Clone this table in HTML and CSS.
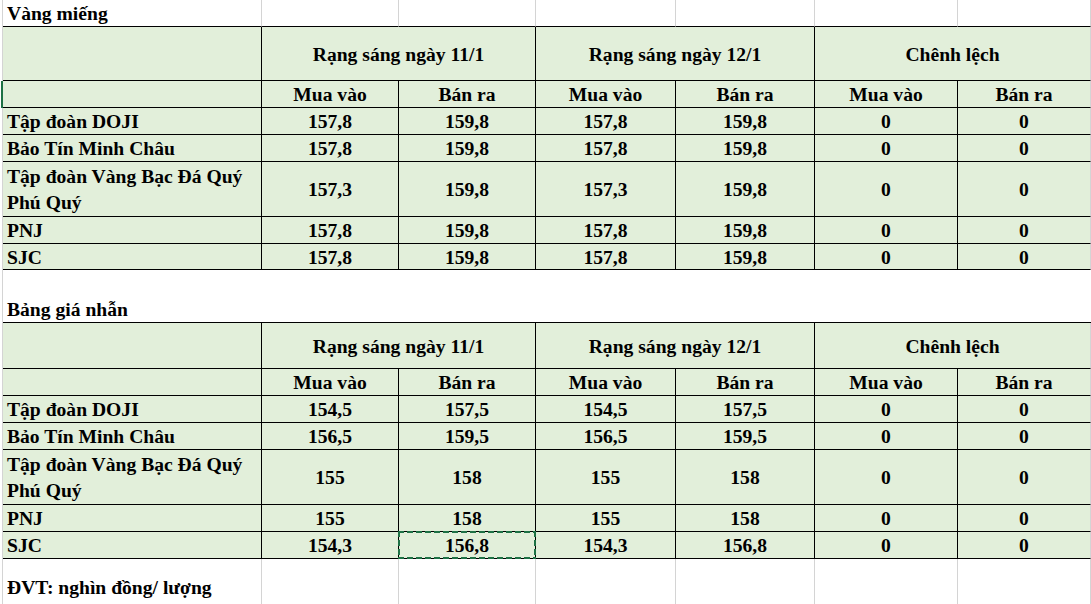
FILE: index.html
```html
<!DOCTYPE html>
<html lang="vi">
<head>
<meta charset="utf-8">
<title>Bảng giá vàng</title>
<link rel="stylesheet" href="styles.css">
</head>
<body>
<div class="sheet">
<table class="grid">
  <colgroup>
    <col class="ca"><col class="cb"><col class="cc"><col class="cd"><col class="ce"><col class="cf"><col class="cg">
  </colgroup>
  <tbody>
    <tr class="h27">
      <td class="title lined left">Vàng miếng</td><td class="title lined"></td><td class="title lined"></td><td class="title lined"></td><td class="title lined"></td><td class="title lined"></td><td class="title lined"></td>
    </tr>
    <tr class="h54">
      <td class="g"></td><td class="g" colspan="2">Rạng sáng ngày 11/1</td><td class="g" colspan="2">Rạng sáng ngày 12/1</td><td class="g last" colspan="2">Chênh lệch</td>
    </tr>
    <tr class="h27">
      <td class="g mark"></td><td class="g">Mua vào</td><td class="g">Bán ra</td><td class="g">Mua vào</td><td class="g">Bán ra</td><td class="g">Mua vào</td><td class="g last">Bán ra</td>
    </tr>
    <tr class="h27">
      <td class="g left">Tập đoàn DOJI</td><td class="g">157,8</td><td class="g">159,8</td><td class="g">157,8</td><td class="g">159,8</td><td class="g">0</td><td class="g last">0</td>
    </tr>
    <tr class="h27">
      <td class="g left">Bảo Tín Minh Châu</td><td class="g">157,8</td><td class="g">159,8</td><td class="g">157,8</td><td class="g">159,8</td><td class="g">0</td><td class="g last">0</td>
    </tr>
    <tr class="h55">
      <td class="g left wrap">Tập đoàn Vàng Bạc Đá Quý<br>Phú Quý</td><td class="g">157,3</td><td class="g">159,8</td><td class="g">157,3</td><td class="g">159,8</td><td class="g">0</td><td class="g last">0</td>
    </tr>
    <tr class="h27">
      <td class="g left">PNJ</td><td class="g">157,8</td><td class="g">159,8</td><td class="g">157,8</td><td class="g">159,8</td><td class="g">0</td><td class="g last">0</td>
    </tr>
    <tr class="h26">
      <td class="g left">SJC</td><td class="g">157,8</td><td class="g">159,8</td><td class="g">157,8</td><td class="g">159,8</td><td class="g">0</td><td class="g last">0</td>
    </tr>

    <tr class="h26">
      <td class="blank" colspan="7"></td>
    </tr>
    <tr class="h27">
      <td class="blank lined left" colspan="7">Bảng giá nhẫn</td>
    </tr>
    <tr class="h46">
      <td class="g"></td><td class="g" colspan="2">Rạng sáng ngày 11/1</td><td class="g" colspan="2">Rạng sáng ngày 12/1</td><td class="g last" colspan="2">Chênh lệch</td>
    </tr>
    <tr class="h27">
      <td class="g"></td><td class="g">Mua vào</td><td class="g">Bán ra</td><td class="g">Mua vào</td><td class="g">Bán ra</td><td class="g">Mua vào</td><td class="g last">Bán ra</td>
    </tr>
    <tr class="h27">
      <td class="g left">Tập đoàn DOJI</td><td class="g">154,5</td><td class="g">157,5</td><td class="g">154,5</td><td class="g">157,5</td><td class="g">0</td><td class="g last">0</td>
    </tr>
    <tr class="h27">
      <td class="g left">Bảo Tín Minh Châu</td><td class="g">156,5</td><td class="g">159,5</td><td class="g">156,5</td><td class="g">159,5</td><td class="g">0</td><td class="g last">0</td>
    </tr>
    <tr class="h54">
      <td class="g left wrap">Tập đoàn Vàng Bạc Đá Quý<br>Phú Quý</td><td class="g">155</td><td class="g">158</td><td class="g">155</td><td class="g">158</td><td class="g">0</td><td class="g last">0</td>
    </tr>
    <tr class="h27">
      <td class="g left">PNJ</td><td class="g">155</td><td class="g">158</td><td class="g">155</td><td class="g">158</td><td class="g">0</td><td class="g last">0</td>
    </tr>
    <tr class="h27">
      <td class="g left">SJC</td><td class="g">154,3</td><td class="g sel">156,8</td><td class="g">154,3</td><td class="g">156,8</td><td class="g">0</td><td class="g last">0</td>
    </tr>

    <tr class="h14">
      <td class="w"></td><td class="w"></td><td class="w"></td><td class="w"></td><td class="w"></td><td class="w"></td><td class="w"></td>
    </tr>
    <tr class="h27">
      <td class="w left note">ĐVT: nghìn đồng/ lượng</td><td class="w"></td><td class="w"></td><td class="w"></td><td class="w"></td><td class="w"></td><td class="w"></td>
    </tr>
    <tr class="h20">
      <td class="w"></td><td class="w"></td><td class="w"></td><td class="w"></td><td class="w"></td><td class="w"></td><td class="w"></td>
    </tr>
  </tbody>
</table>
</div>
</body>
</html>
```

FILE: styles.css
```css
html, body {
  margin: 0;
  padding: 0;
  background: #ffffff;
}

body {
  width: 1091px;
  height: 604px;
  overflow: hidden;
}

.sheet {
  margin-left: 2px;
  border-left: 1px solid #d4d4d4;
  height: 604px;
  box-sizing: border-box;
}

.grid {
  table-layout: fixed;
  border-collapse: separate;
  border-spacing: 0;
  width: 1088px;
  font-family: "Liberation Serif", "Times New Roman", serif;
  font-weight: bold;
  font-size: 19.6px;
  color: #000;
}

.ca { width: 259px; }
.cb { width: 137px; }
.cc { width: 137px; }
.cd { width: 140px; }
.ce { width: 139px; }
.cf { width: 143px; }
.cg { width: 133px; }

.h14 { height: 14px; }
.h20 { height: 20px; }
.h26 { height: 26px; }
.h27 { height: 27px; }
.h46 { height: 46px; }
.h54 { height: 54px; }
.h55 { height: 55px; }

.grid td {
  box-sizing: border-box;
  padding: 2px 0 0 0;
  text-align: center;
  vertical-align: middle;
  line-height: 22px;
  white-space: nowrap;
  overflow: visible;
}

.grid td.left {
  text-align: left;
  padding-left: 4px;
}

.grid td.wrap {
  white-space: normal;
  line-height: 26px;
}

.title {
  border-right: 1px solid #d4d4d4;
}

.lined {
  border-bottom: 1px solid #000;
}

.blank {
  background: #fff;
}

.w {
  border-right: 1px solid #d4d4d4;
}

.g {
  background: #e2efda;
  border-right: 1px solid #000;
  border-bottom: 1px solid #000;
}

.g.last {
  border-right: 1px solid #d4d4d4;
}

.mark {
  position: relative;
}

.mark::before {
  content: "";
  position: absolute;
  left: -2px;
  top: 0;
  bottom: -1px;
  width: 2px;
  background: #1e7145;
}

.sel {
  position: relative;
}

.sel::after {
  content: "";
  position: absolute;
  left: -1px;
  top: -1px;
  right: -1px;
  bottom: -1px;
  background-image:
    repeating-linear-gradient(90deg, #1e7145 0 6px, transparent 6px 9px),
    repeating-linear-gradient(90deg, #1e7145 0 6px, transparent 6px 9px),
    repeating-linear-gradient(180deg, #1e7145 0 6px, transparent 6px 9px),
    repeating-linear-gradient(180deg, #1e7145 0 6px, transparent 6px 9px);
  background-size: 100% 2px, 100% 2px, 2px 100%, 2px 100%;
  background-position: left top, left bottom, left top, right top;
  background-repeat: no-repeat;
}
```
